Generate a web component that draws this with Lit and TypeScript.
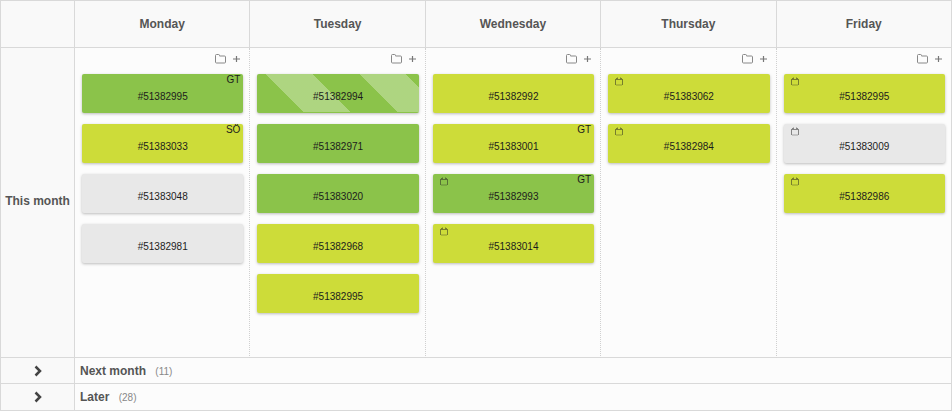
import { LitElement, html, css, nothing } from "lit";
import { customElement, property, state } from "lit/decorators.js";
import { classMap } from "lit/directives/class-map.js";

type Tone = "green" | "lime" | "grey";

interface Order {
  id: string;
  tone: Tone;
  initials?: string;
  scheduled?: boolean;
  striped?: boolean;
}

interface Day {
  name: string;
  orders: Order[];
}

const DAYS: Day[] = [
  {
    name: "Monday",
    orders: [
      { id: "51382995", tone: "green", initials: "GT" },
      { id: "51383033", tone: "lime", initials: "SÖ" },
      { id: "51383048", tone: "grey" },
      { id: "51382981", tone: "grey" },
    ],
  },
  {
    name: "Tuesday",
    orders: [
      { id: "51382994", tone: "green", striped: true },
      { id: "51382971", tone: "green" },
      { id: "51383020", tone: "green" },
      { id: "51382968", tone: "lime" },
      { id: "51382995", tone: "lime" },
    ],
  },
  {
    name: "Wednesday",
    orders: [
      { id: "51382992", tone: "lime" },
      { id: "51383001", tone: "lime", initials: "GT" },
      { id: "51382993", tone: "green", initials: "GT", scheduled: true },
      { id: "51383014", tone: "lime", scheduled: true },
    ],
  },
  {
    name: "Thursday",
    orders: [
      { id: "51383062", tone: "lime", scheduled: true },
      { id: "51382984", tone: "lime", scheduled: true },
    ],
  },
  {
    name: "Friday",
    orders: [
      { id: "51382995", tone: "lime", scheduled: true },
      { id: "51383009", tone: "grey", scheduled: true },
      { id: "51382986", tone: "lime", scheduled: true },
    ],
  },
];

const LATER_GROUPS = [
  { name: "Next month", count: 11 },
  { name: "Later", count: 28 },
];

@customElement("order-card")
export class OrderCard extends LitElement {
  @property({ attribute: false }) order!: Order;

  static styles = css`
    :host {
      display: block;
    }
    .card {
      position: relative;
      display: flex;
      align-items: center;
      justify-content: center;
      box-sizing: border-box;
      height: 39px;
      padding-top: 6px;
      border-radius: 2px;
      box-shadow: 0 1px 3px rgba(0, 0, 0, 0.26);
      font-size: 10px;
      line-height: 12px;
      color: #1c1c1c;
    }
    .green {
      background-color: #8bc34a;
    }
    .lime {
      background-color: #cddc39;
    }
    .grey {
      background-color: #e8e8e8;
    }
    .striped {
      background-image: repeating-linear-gradient(
        45deg,
        transparent 0 33px,
        rgba(255, 255, 255, 0.3) 33px 66px
      );
      background-size: 100% 38px;
      background-repeat: no-repeat;
    }
    .initials {
      position: absolute;
      top: 0;
      right: 3px;
    }
    .calendar {
      position: absolute;
      top: 3px;
      left: 7px;
      width: 8px;
      height: 9px;
      opacity: 0.5;
    }
  `;

  render() {
    const o = this.order;
    return html`<div class=${classMap({ card: true, [o.tone]: true, striped: !!o.striped })}>
      ${o.scheduled
        ? html`<svg class="calendar" viewBox="0 0 8 9" fill="none" stroke="#222" aria-hidden="true">
            <path d="M.5 3v5M7.500 3v5" />
            <path d="M1 8h6" stroke-opacity=".7" />
            <path d="M0 2.500h8" />
            <path d="M1 1.500h2M5 1.500h2" />
            <path d="M2.500 0v1M5.500 0v1" stroke-opacity=".5" />
          </svg>`
        : nothing}
      <span>#${o.id}</span>
      ${o.initials ? html`<span class="initials">${o.initials}</span>` : nothing}
    </div>`;
  }
}

@customElement("app-root")
export class AppRoot extends LitElement {
  @state() private expanded = "";

  static styles = css`
    :host {
      display: block;
      font-family: "Liberation Sans", Arial, sans-serif;
      font-size: 12px;
      color: #555;
      background: #fcfcfc;
    }
    .board {
      width: 100%;
      table-layout: fixed;
      border-collapse: separate;
      border-spacing: 0;
      border-top: 1px solid #d9d9d9;
      border-left: 1px solid #d9d9d9;
    }
    th,
    td {
      box-sizing: border-box;
      padding: 0;
      border-right: 1px solid #d9d9d9;
      border-bottom: 1px solid #d9d9d9;
    }
    th {
      background: #f9f9f9;
      font-weight: bold;
      text-align: center;
    }
    .period {
      width: 74px;
    }
    .heading {
      height: 47px;
    }
    .current {
      padding-bottom: 4px;
    }
    .day {
      height: 310px;
      padding: 4px 6px 0 7px;
      vertical-align: top;
    }
    .day:not(:last-child) {
      border-right: 1px dotted #d0d0d0;
    }
    .tools {
      display: flex;
      justify-content: flex-end;
      gap: 3px;
      height: 14px;
      margin-bottom: 8px;
    }
    button {
      display: flex;
      align-items: center;
      justify-content: center;
      padding: 0;
      border: 0;
      background: none;
      color: inherit;
      cursor: pointer;
    }
    .tool {
      width: 13px;
      height: 14px;
    }
    .cards {
      display: flex;
      flex-direction: column;
      gap: 11px;
    }
    .toggle {
      width: 100%;
      height: 26px;
    }
    .group {
      padding-left: 5px;
      text-align: left;
    }
    .name {
      font-weight: bold;
    }
    .count {
      margin-left: 6px;
      font-size: 10px;
      color: #888;
    }
    .group-row:not(:last-child) .toggle {
      height: 25px;
    }
  `;

  private toggle(name: string) {
    this.expanded = this.expanded === name ? "" : name;
  }

  private renderDay(day: Day) {
    return html`<td class="day">
      <div class="tools">
        <button class="tool" aria-label="Open folder for ${day.name}">
          <svg width="11" height="10" viewBox="0 0 11 10" fill="none" stroke="#888" aria-hidden="true">
            <path d="M.5 8V1.500q0-1 1-1h2q1 0 1 1v.5h5q1 0 1 1v5q0 1-1 1h-8q-1 0-1-1z" />
          </svg>
        </button>
        <button class="tool" aria-label="Add order to ${day.name}">
          <svg width="7" height="8" viewBox="0 0 7 8" fill="none" stroke="#777" aria-hidden="true">
            <path d="M3.500 1v6M0 4h7" stroke-width="1.200" />
          </svg>
        </button>
      </div>
      <div class="cards">
        ${day.orders.map((order) => html`<order-card .order=${order}></order-card>`)}
      </div>
    </td>`;
  }

  render() {
    return html`<table class="board">
      <thead>
        <tr>
          <th class="period heading"></th>
          ${DAYS.map((day) => html`<th class="heading" scope="col">${day.name}</th>`)}
        </tr>
      </thead>
      <tbody>
        <tr>
          <th class="current" scope="row">This month</th>
          ${DAYS.map((day) => this.renderDay(day))}
        </tr>
        ${LATER_GROUPS.map(
          (group) => html`<tr class="group-row">
            <th>
              <button
                class="toggle"
                aria-label="Show ${group.name}"
                aria-expanded=${this.expanded === group.name}
                @click=${() => this.toggle(group.name)}
              >
                <svg width="8" height="12" viewBox="0 0 8 12" fill="none" stroke="#444" stroke-width="2.500" aria-hidden="true">
                  <path d="M1.500 1.500L6 6L1.500 10.500" />
                </svg>
              </button>
            </th>
            <td class="group" colspan="5">
              <span class="name">${group.name}</span>
              <span class="count">(${group.count})</span>
            </td>
          </tr>`
        )}
      </tbody>
    </table>`;
  }
}
